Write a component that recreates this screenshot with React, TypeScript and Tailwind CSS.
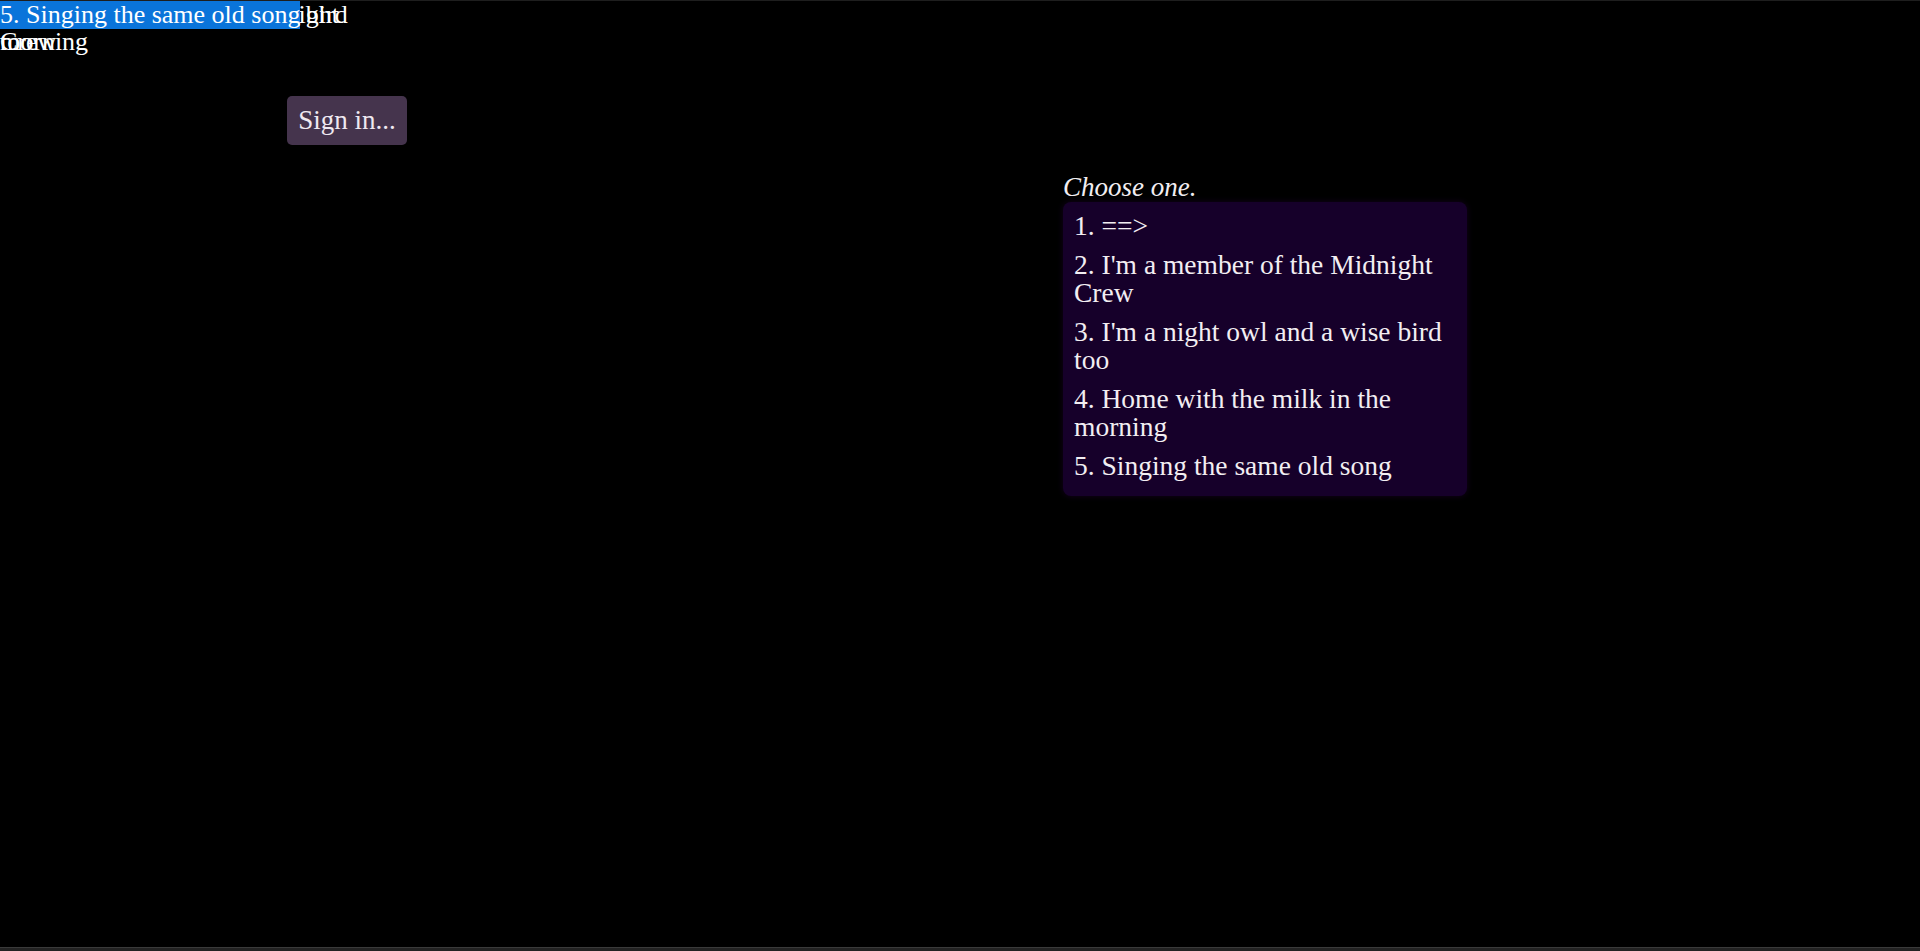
import React from 'react';

const answers = [
  '1. ==>',
  "2. I'm a member of the Midnight Crew",
  "3. I'm a night owl and a wise bird too",
  '4. Home with the milk in the morning',
  '5. Singing the same old song',
];

const serif = "font-['Liberation_Serif',serif]";

const App = () => {
  return (
    <div className={`relative h-[951px] w-full overflow-hidden bg-black text-[#f2eef2] border-t border-[#1e1e1e] ${serif}`}>
      {/* drag ghosts stacked in the corner */}
      <div className="absolute left-0 top-0 w-[350px] text-[26px] leading-[27px] text-white">
        {answers.map((a, i) => (
          <div key={i} className="absolute left-0 top-0 w-[350px]">
            <span className={i === answers.length - 1 ? 'bg-[#0a74da]' : ''}>{a}</span>
          </div>
        ))}
      </div>

      <div className="flex items-start pl-[287px] pt-[95px]">
        <button className="w-[120px] rounded-[5px] bg-[#45344d] py-[8px] text-center text-[27px] leading-[33px] text-[#efe9f1]">
          Sign in...
        </button>

        <div className="ml-[656px] mt-[76px] flex flex-col">
          <p className="text-[27px] italic leading-[30px] text-[#f2eef2]">Choose one.</p>
          <ol className="flex w-[404px] flex-col gap-[11px] rounded-[8px] bg-[#16002a] px-[11px] pt-[10px] pb-[16px] text-[27.5px] leading-[28px] shadow-[0_0_6px_rgba(40,0,60,0.5)]">
            {answers.map((a, i) => (
              <li key={i}>{a}</li>
            ))}
          </ol>
        </div>
      </div>

      <div className="absolute bottom-0 left-0 h-[4px] w-full border-t border-[#3a3a3a] bg-[#222]" />
    </div>
  );
};

export default App;
